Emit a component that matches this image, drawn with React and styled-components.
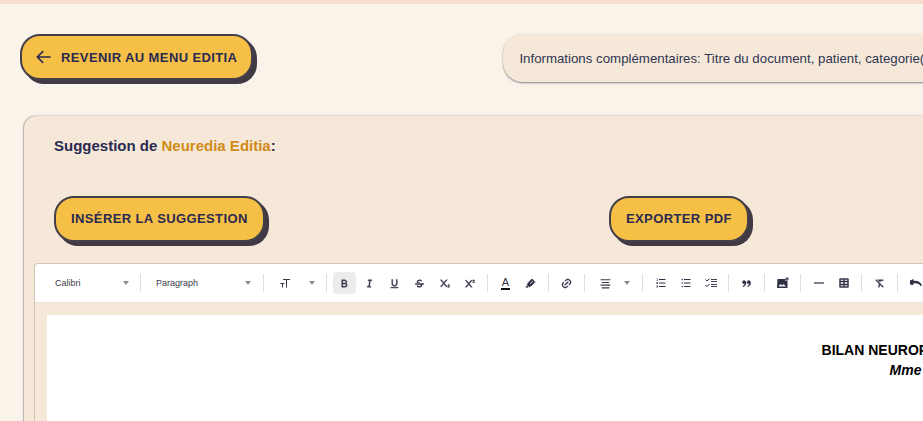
import React from 'react';
import styled, { createGlobalStyle } from 'styled-components';
import {
    RiBold,
    RiItalic,
    RiUnderline,
    RiStrikethrough,
    RiSubscript,
    RiSuperscript,
    RiMarkPenFill,
    RiLink,
    RiAlignCenter,
    RiListOrdered,
    RiListUnordered,
    RiDoubleQuotesR,
    RiTable2,
    RiFormatClear,
    RiFontSize2,
} from 'react-icons/ri';

const GlobalStyle = createGlobalStyle`
  html, body {
    margin: 0;
    height: 421px;
    overflow: hidden;
    background: #faf3ea;
    font-family: "Liberation Sans", Arial, sans-serif;
    color: #2a2a52;
  }
`;

const TopStrip = styled.div`
  height: 4px;
  background: #f9dccb;
`;

const Page = styled.div`
  width: 1798px;
  padding: 30px 0 0 20px;
`;

const TopRow = styled.div`
  display: flex;
  align-items: flex-start;
`;

const PillButton = styled.button`
  display: flex;
  align-items: center;
  box-sizing: border-box;
  height: 46px;
  padding: 0 15px;
  background: #f6bf45;
  border: 2px solid #453f4a;
  border-radius: 20px;
  box-shadow: 4px 4px 0 #403a45;
  font: bold 13px "Liberation Sans", Arial, sans-serif;
  letter-spacing: 0.39px;
  color: #2a2a52;
  white-space: nowrap;
`;

const BackButton = styled(PillButton)`
  padding: 0 14px 0 12px;
`;

const ActionButton = styled(PillButton)`
  padding-bottom: 2px;
`;

const BackArrow = styled.svg`
  width: 20px;
  height: 20px;
  margin-right: 7px;
`;

const InfoPill = styled.div`
  margin-left: 250px;
  width: 900px;
  height: 48px;
  padding-left: 16px;
  display: flex;
  align-items: center;
  box-sizing: border-box;
  background: #f5e8d8;
  border-radius: 20px;
  box-shadow: 0 1px 2px rgba(60, 55, 70, 0.6);
  font-size: 13.27px;
  color: #2f3553;
`;

const Card = styled.section`
  margin: 34px 0 0 4px;
  padding: 20px 0 0 10px;
  background: #f5e8d8;
  border-radius: 12px;
  box-shadow: -1px 0 1px rgba(60, 55, 70, 0.35), 0 -1px 1px rgba(60, 55, 70, 0.12);
`;

const Title = styled.h2`
  margin: 0 0 0 20px;
  font-size: 15px;
  line-height: 20px;
  font-weight: bold;
`;

const Brand = styled.span`
  color: #d18b16;
`;

const Actions = styled.div`
  display: grid;
  grid-template-columns: 555px auto;
  justify-content: start;
  justify-items: start;
  margin: 40px 0 0 20px;
`;

const Editor = styled.div`
  margin-top: 21px;
  border: 1px solid #cfc3b6;
  border-radius: 4px 0 0 0;
`;

const Toolbar = styled.div`
  display: flex;
  align-items: center;
  height: 38px;
  padding-left: 8px;
  background: #fff;
  border-bottom: 1px solid #e6e3df;
  border-radius: 4px 0 0 0;
  color: #2f2f45;
`;

const Select = styled.div`
  display: flex;
  flex: none;
  align-items: center;
  justify-content: space-between;
  box-sizing: border-box;
  width: ${(p) => p.$width}px;
  padding: 0 ${(p) => p.$right}px 0 ${(p) => p.$left}px;
  font-size: 9px;
  color: #3b3b4a;
`;

const Caret = styled.span`
  width: 0;
  height: 0;
  border-left: 3.5px solid transparent;
  border-right: 3.5px solid transparent;
  border-top: 4px solid #8b8b93;
`;

const Separator = styled.span`
  flex: none;
  width: 1px;
  height: 18px;
  margin: 0 6px 0 4px;
  background: #dedede;
`;

const ToolButton = styled.span`
  flex: none;
  display: flex;
  align-items: center;
  justify-content: center;
  width: 23px;
  height: 22px;
  margin-right: 2px;
  border-radius: 4px;
  background: ${(p) => (p.$active ? '#ececec' : 'transparent')};

  svg {
    stroke: ${(p) => (p.$heavy ? 'currentColor' : 'none')};
    stroke-width: ${(p) => (p.$heavy ? 0.9 : 0)};
  }
`;

const ColorLetter = styled.span`
  font-size: 11px;
  line-height: 11px;
  border-bottom: 2px solid #111;
  padding: 0 1px;
`;

const FlippedFontSize = styled(RiFontSize2)`
  transform: scaleX(-1);
`;

const Sheet = styled.div`
  padding: 12px 0 0 12px;
`;

const Document = styled.div`
  height: 200px;
  padding-top: 25px;
  background: #fff;
  color: #000;
  text-align: center;
  font-size: 14px;
  line-height: 20px;
`;

const DocTitle = styled.div`
  font-weight: bold;
`;

const DocSubtitle = styled.div`
  font-weight: bold;
  font-style: italic;
`;

const Tool = ({ icon: Icon, size = 11, active, heavy = true }) => (
    <ToolButton $active={active} $heavy={heavy}>
        <Icon size={size} />
    </ToolButton>
);

// the packages only have hollow or differently shaped versions of these four
const ImageAddIcon = ({ size }) => (
    <svg width={size} height={size} viewBox="0 0 12 12">
        <path d="M0.5 2h8v2h2v7h-10.500z" fill="currentColor" />
        <path d="M1.500 9.500l2-2.500 1.500 1.500 1.500-1.500 2.500 2.500z" fill="#fff" />
        <path d="M9.500 0v1.500h-1.500v1h1.500v1.500h1v-1.500h1.500v-1h-1.500v-1.500z" fill="currentColor" />
    </svg>
);

const HrIcon = ({ size }) => (
    <svg width={size} height={size} viewBox="0 0 12 12">
        <rect x="1" y="5.400" width="10" height="1.200" fill="currentColor" />
    </svg>
);

const CheckListIcon = ({ size }) => (
    <svg width={size + 1} height={size + 1} viewBox="0 0 12 12">
        <path d="M0.500 2.500l1.500 1.500 2.500-2.500M0.500 8l1.500 1.500 2.500-2.500" fill="none" stroke="currentColor" strokeWidth="1" />
        <path d="M6 2.500h6M6 4.500h6M6 7.500h6M6 9.500h6" fill="none" stroke="currentColor" strokeWidth="0.900" />
    </svg>
);

const UndoIcon = ({ size }) => (
    <svg width={size + 1} height={size + 1} viewBox="0 0 12 12">
        <path d="M0 3.500l3.500-1.500v1.800c3.500-0.500 7 0.700 8.500 4.700l-1.500 0.500c-1.300-2.500-4-3.200-7-2.700v1.700l-3.500-0.500z" fill="currentColor" />
    </svg>
);

export default function App() {
    return (
        <>
            <GlobalStyle />
            <TopStrip />
            <Page>
                <TopRow>
                    <BackButton>
                        <BackArrow viewBox="0 0 24 24" fill="none" stroke="currentColor" strokeWidth="2">
                            <path d="M20 12H4M11 5l-7 7 7 7" />
                        </BackArrow>
                        REVENIR AU MENU EDITIA
                    </BackButton>
                    <InfoPill>Informations complémentaires: Titre du document, patient, categorie(s)</InfoPill>
                </TopRow>
                <Card>
                    <Title>
                        Suggestion de <Brand>Neuredia Editia</Brand>:
                    </Title>
                    <Actions>
                        <ActionButton>INSÉRER LA SUGGESTION</ActionButton>
                        <ActionButton>EXPORTER PDF</ActionButton>
                    </Actions>
                    <Editor>
                        <Toolbar>
                            <Select $width={93} $left={12} $right={7}>Calibri<Caret /></Select>
                            <Separator />
                            <Select $width={112} $left={9} $right={8}>Paragraph<Caret /></Select>
                            <Separator />
                            <Select $width={52} $left={9} $right={7}><FlippedFontSize size={12} /><Caret /></Select>
                            <Separator />
                            <Tool icon={RiBold} active />
                            <Tool icon={RiItalic} />
                            <Tool icon={RiUnderline} />
                            <Tool icon={RiStrikethrough} />
                            <Tool icon={RiSubscript} />
                            <Tool icon={RiSuperscript} />
                            <Separator />
                            <ToolButton><ColorLetter>A</ColorLetter></ToolButton>
                            <Tool icon={RiMarkPenFill} />
                            <Separator />
                            <Tool icon={RiLink} />
                            <Separator />
                            <Select $width={47} $left={8} $right={8}><RiAlignCenter size={13} /><Caret /></Select>
                            <Separator />
                            <Tool icon={RiListOrdered} size={12} heavy={false} />
                            <Tool icon={RiListUnordered} size={12} heavy={false} />
                            <Tool icon={CheckListIcon} heavy={false} />
                            <Separator />
                            <Tool icon={RiDoubleQuotesR} />
                            <Separator />
                            <Tool icon={ImageAddIcon} size={12} heavy={false} />
                            <Separator />
                            <Tool icon={HrIcon} size={12} heavy={false} />
                            <Tool icon={RiTable2} size={12} />
                            <Separator />
                            <Tool icon={RiFormatClear} />
                            <Separator />
                            <Tool icon={UndoIcon} heavy={false} />
                        </Toolbar>
                        <Sheet>
                            <Document>
                                <DocTitle>BILAN NEUROPSYCHOLOGIQUE</DocTitle>
                                <DocSubtitle>Mme Dupont</DocSubtitle>
                            </Document>
                        </Sheet>
                    </Editor>
                </Card>
            </Page>
        </>
    );
}
